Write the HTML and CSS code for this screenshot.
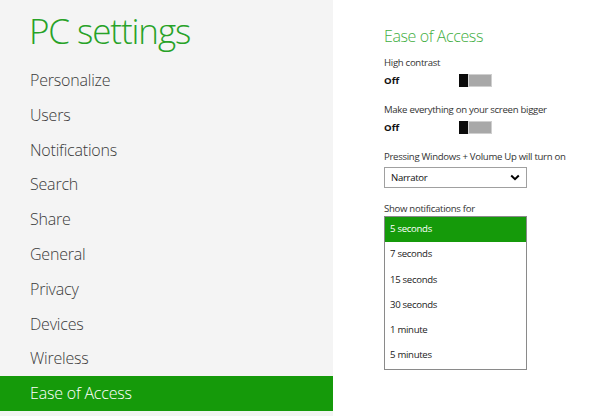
FILE: index.html
```html
<!DOCTYPE html>
<html>
<head>
<meta charset="utf-8">
<link rel="stylesheet" href="styles.css">
</head>
<body>
<div class="app">
  <nav class="side">
    <h1 class="title">PC settings</h1>
    <ul class="menu">
      <li class="item">Personalize</li>
      <li class="item">Users</li>
      <li class="item">Notifications</li>
      <li class="item">Search</li>
      <li class="item">Share</li>
      <li class="item">General</li>
      <li class="item">Privacy</li>
      <li class="item">Devices</li>
      <li class="item">Wireless</li>
      <li class="item active">Ease of Access</li>
    </ul>
  </nav>
  <main class="content">
    <h2 class="heading">Ease of Access</h2>
    <div class="setting s-contrast">
      <div class="label">High contrast</div>
      <div class="row"><span class="state">Off</span><span class="toggle"><span class="thumb"></span><span class="track"></span></span></div>
    </div>
    <div class="setting s-bigger">
      <div class="label">Make everything on your screen bigger</div>
      <div class="row"><span class="state">Off</span><span class="toggle"><span class="thumb"></span><span class="track"></span></span></div>
    </div>
    <div class="setting s-press">
      <div class="label">Pressing Windows + Volume Up will turn on</div>
      <div class="select"><span>Narrator</span>
        <svg class="chev" width="10" height="7" viewBox="0 0 10 7"><path d="M1.2 1.5 L5 5.2 L8.8 1.5" fill="none" stroke="#000" stroke-width="2"/></svg>
      </div>
    </div>
    <div class="setting s-notify">
      <div class="label">Show notifications for</div>
      <ul class="list">
        <li class="opt selected">5 seconds</li>
        <li class="opt">7 seconds</li>
        <li class="opt">15 seconds</li>
        <li class="opt">30 seconds</li>
        <li class="opt">1 minute</li>
        <li class="opt">5 minutes</li>
      </ul>
    </div>
  </main>
</div>
</body>
</html>
```

FILE: styles.css
```css
html, body {
  margin: 0;
  padding: 0;
  background: #ffffff;
}
body {
  font-family: "Segoe UI", "Open Sans", "Liberation Sans", sans-serif;
  width: 599px;
  height: 416px;
  overflow: hidden;
}
.app {
  display: flex;
  height: 416px;
}
.side {
  width: 333px;
  background: #f4f4f4;
  display: flex;
  flex-direction: column;
}
.title {
  margin: 0;
  padding: 9px 0 0 29px;
  height: 54px;
  font-size: 35px;
  font-weight: 300;
  line-height: 44px;
  color: #27a227;
  letter-spacing: -1.1px;
}
.menu {
  list-style: none;
  margin: 0;
  padding: 0;
}
.item {
  height: 34.8px;
  line-height: 34px;
  padding-left: 30px;
  font-size: 16px;
  font-weight: 300;
  color: #3a3a3a;
  letter-spacing: -0.2px;
}
.item.active {
  background: #159a0a;
  color: #ffffff;
}
.content {
  flex: 1;
  padding-left: 51px;
  display: flex;
  flex-direction: column;
}
.heading {
  margin: 0;
  padding-top: 24px;
  height: 25px;
  line-height: 25px;
  font-size: 16px;
  font-weight: 300;
  color: #3fae3f;
  letter-spacing: -0.4px;
}
.label {
  font-size: 9.6px;
  line-height: 14px;
  color: #333;
  letter-spacing: -0.3px;
}
.setting {
  display: flex;
  flex-direction: column;
}
.s-contrast { margin-top: 7px; }
.s-bigger { margin-top: 13px; }
.s-press { margin-top: 13px; }
.s-notify { margin-top: 14px; }
.row {
  display: flex;
  align-items: center;
  height: 20px;
}
.state {
  width: 75px;
  font-size: 9.6px;
  font-weight: 700;
  color: #111;
}
.toggle {
  display: flex;
  width: 33px;
  height: 13px;
}
.thumb {
  width: 9px;
  background: #0a0a0a;
}
.track {
  flex: 1;
  background: #a8a8a8;
  border: 1px solid #cfcfcf;
  border-left: none;
  box-shadow: inset 1px 0 0 #d8d8d8;
}
.select {
  margin-top: 3px;
  height: 19px;
  border: 1px solid #a0a0a0;
  display: flex;
  align-items: center;
  justify-content: space-between;
  padding: 0 6px;
  box-sizing: content-box;
  width: 129px;
  font-size: 9.6px;
  letter-spacing: -0.3px;
  color: #111;
}
.list {
  list-style: none;
  margin: 0;
  padding: 0;
  width: 141px;
  border: 1px solid #8a8a8a;
  background: #fff;
}
.opt {
  height: 25.3px;
  line-height: 24px;
  padding-left: 5px;
  font-size: 9.6px;
  letter-spacing: -0.3px;
  color: #222;
}
.opt.selected {
  background: #159a0a;
  color: #fff;
}
```
